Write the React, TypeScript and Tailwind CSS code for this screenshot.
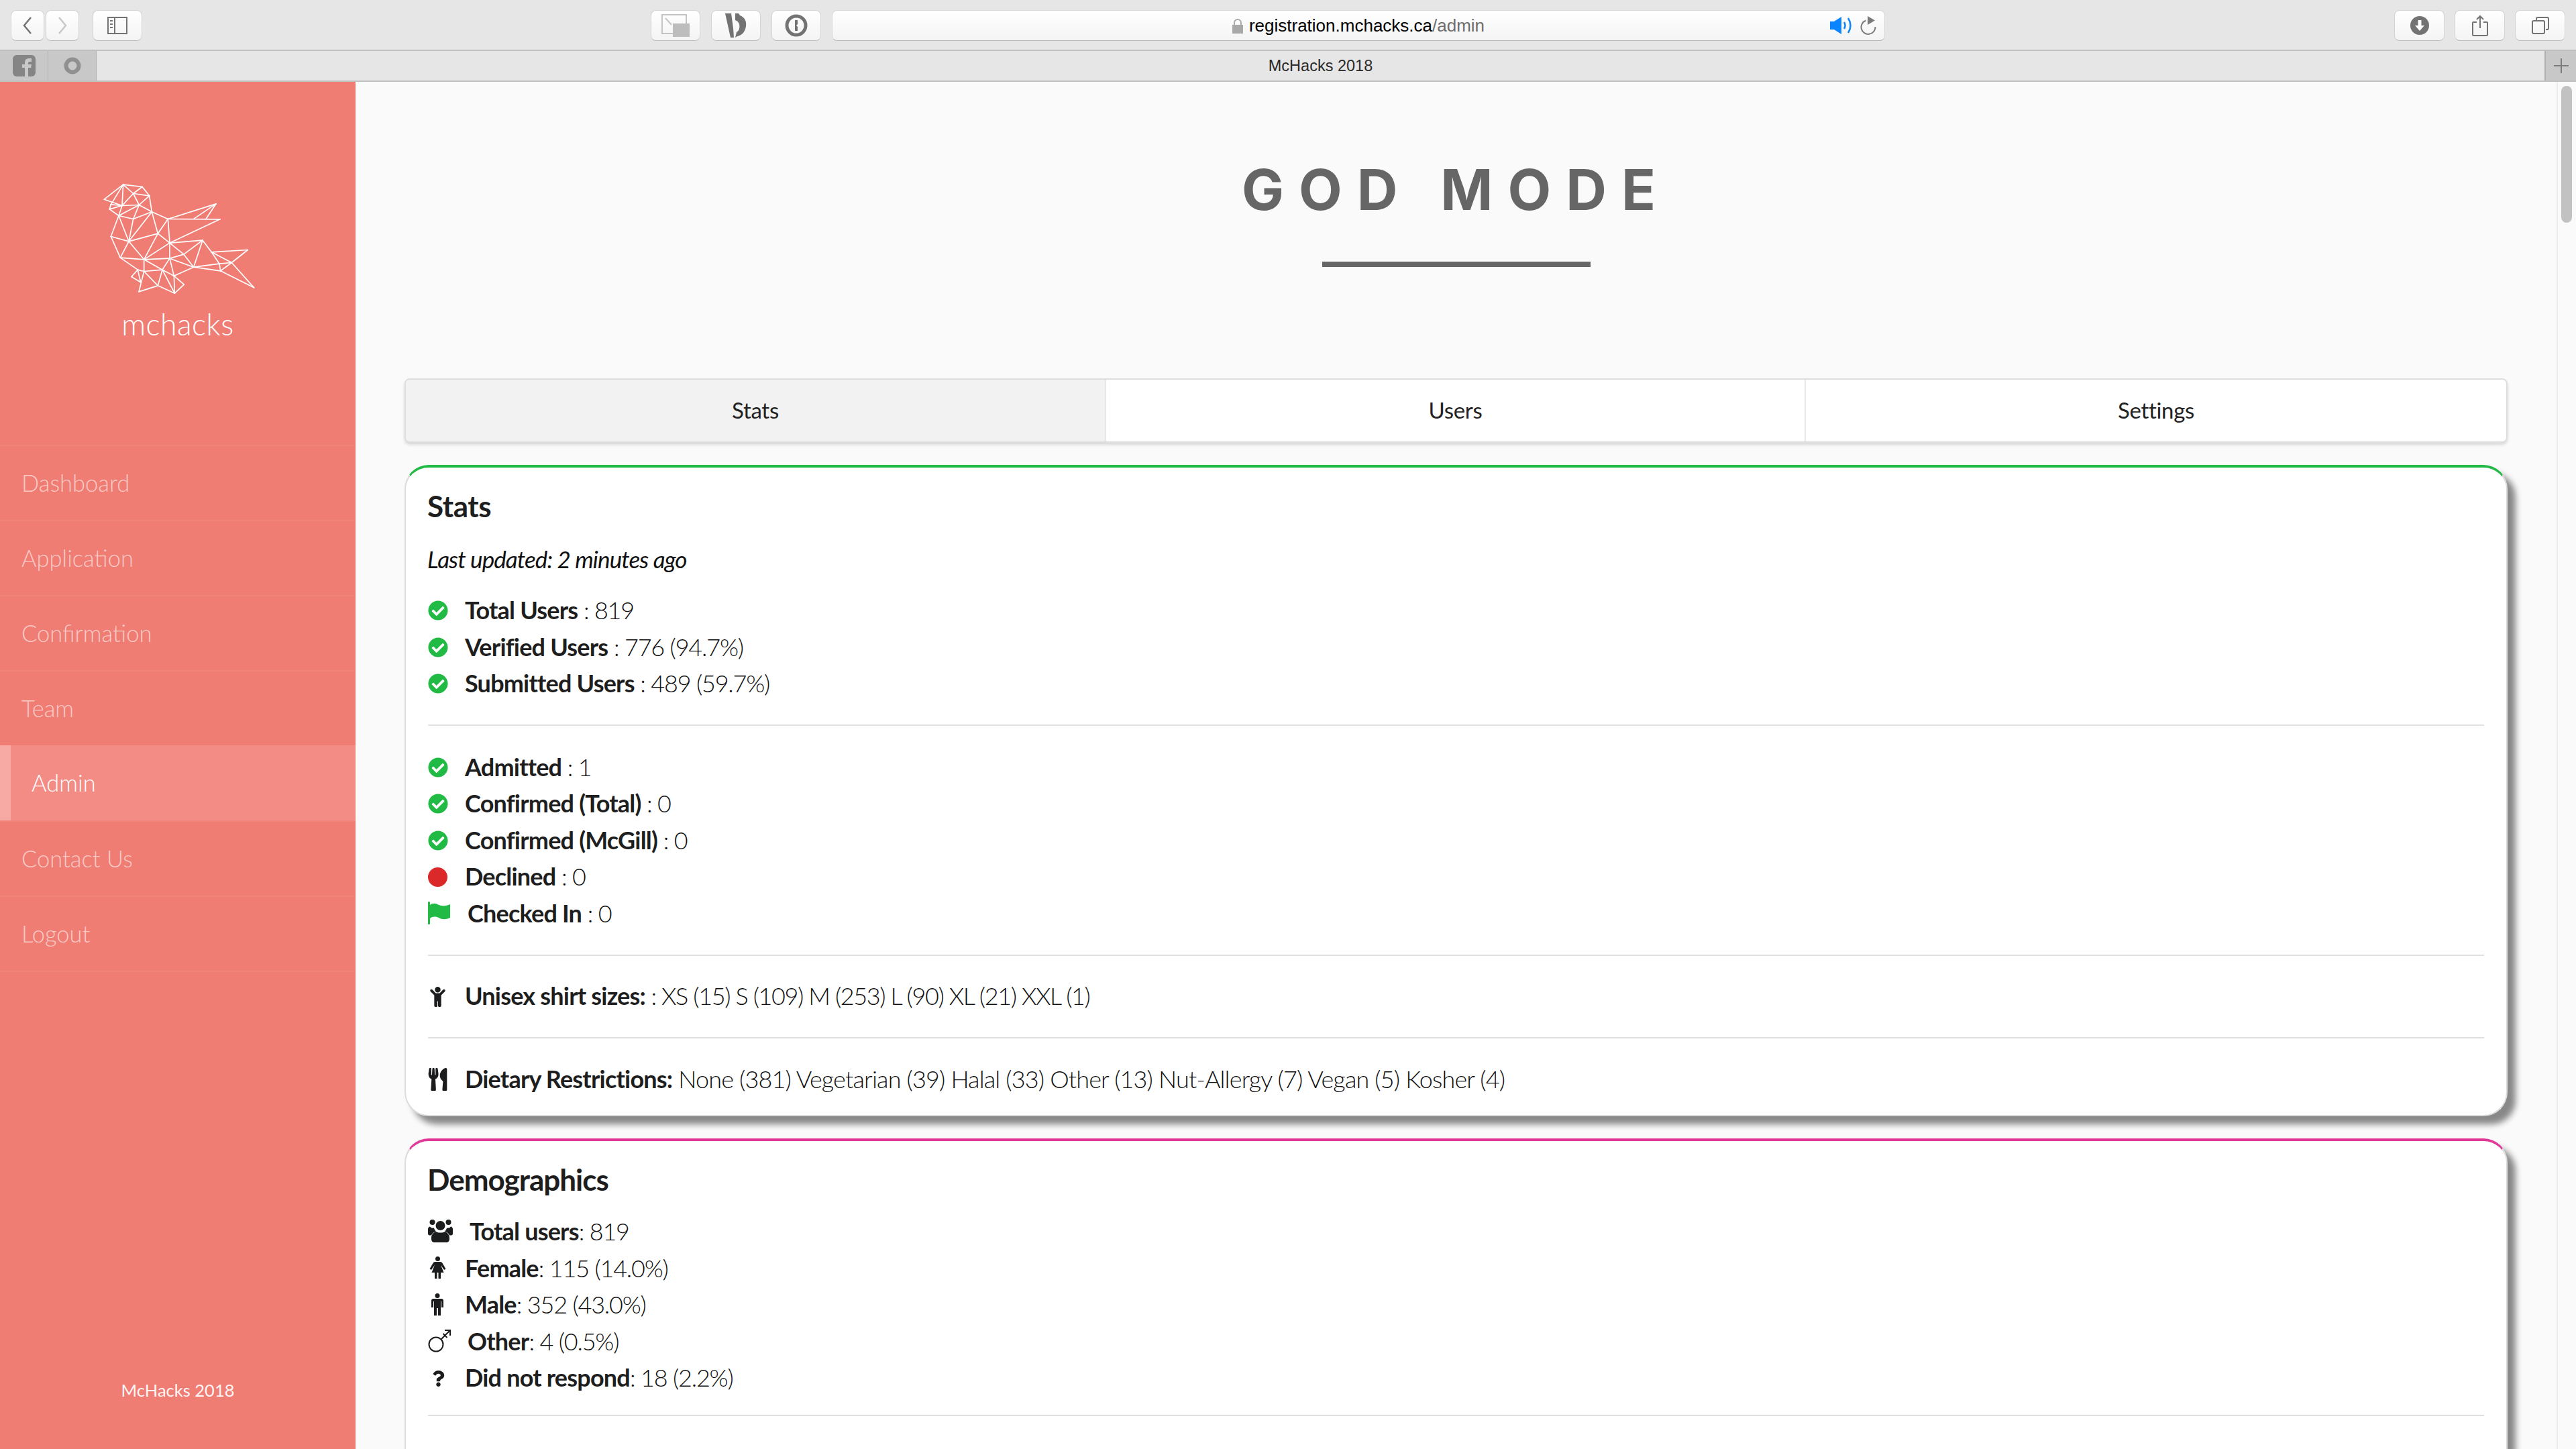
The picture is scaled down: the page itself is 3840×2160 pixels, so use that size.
import type { ReactNode } from 'react';
import { FaCheckCircle, FaChild, FaQuestion, FaUtensils } from 'react-icons/fa';

const POINTS: Record<string, [number, number]> = {
  A: [160, 172], B: [245, 106], C: [330, 116], D: [362, 156], E: [290, 146], F: [240, 200], G: [190, 195], H: [184, 216],
  I: [225, 245], J: [316, 197], K: [373, 228], M: [290, 260], N: [445, 260], O: [660, 192], P: [562, 258], Q: [615, 260],
  R: [678, 261], S: [400, 325], T: [270, 360], U: [190, 338], V: [232, 433], W: [338, 441], X: [453, 367], Y: [600, 355],
  Z: [453, 436], a: [516, 418], b: [560, 475], c: [640, 408], d: [802, 398], e: [730, 455], f: [830, 567], g: [680, 492],
  h: [675, 460], i: [472, 514], j: [420, 487], k: [338, 494], l: [310, 487], m: [282, 518], n: [323, 543], o: [315, 585],
  p: [400, 558], q: [475, 592], r: [517, 553],
};

const EDGES =
  'AB AF BG GF GH HF HI BF BE BC CE CD ED EF EJ DJ DK FJ FI IJ JK JM KM KN KS MT IM IT IU UT UV VT TK TS SN SX SW NX NO NR PO QO RX XY XW XZ Xa Ya Yb Yc ab aZ ZW Zj Zi WV WT Wk Wj Vl lk ln lm mn kj kp ko op pj pq jq ji iq ir rq ib bh bg hg he ge gf ef ed ec cd ch Zb'.split(
    ' ',
  );

function Logo() {
  return (
    <svg viewBox="150 100 690 500" className="w-[230px] h-[167px]" fill="none" stroke="#fff" strokeWidth={5} strokeLinejoin="round" strokeLinecap="round">
      {EDGES.map((edge) => {
        const from = POINTS[edge[0]];
        const to = POINTS[edge[1]];
        return <line key={edge} x1={from[0]} y1={from[1]} x2={to[0]} y2={to[1]} />;
      })}
    </svg>
  );
}

function ToolButton({ width, children }: { width: string; children?: ReactNode }) {
  return (
    <div className={`${width} h-[46px] flex items-center justify-center rounded-[8px] border border-[#d4d4d4] border-b-[#bdbdbd] bg-gradient-to-b from-white to-[#f4f4f4]`}>
      {children}
    </div>
  );
}

function BrowserChrome() {
  return (
    <div className="shrink-0 font-['Liberation_Sans',sans-serif]">
      <div className="h-[74px] bg-[#e6e6e6] flex items-center pl-[16px] pr-[16px] pt-[1px] gap-[16px]">
        <div className="flex gap-[2px]">
          <ToolButton width="w-[50px]">
            <svg width="16" height="28" viewBox="0 0 16 28" fill="none" stroke="#737373" strokeWidth="2.5"><path d="M13 2 3 14l10 12" /></svg>
          </ToolButton>
          <ToolButton width="w-[50px]">
            <svg width="16" height="28" viewBox="0 0 16 28" fill="none" stroke="#c8c8c8" strokeWidth="2.5"><path d="m3 2 10 12L3 26" /></svg>
          </ToolButton>
        </div>
        <div className="ml-[4px]">
          <ToolButton width="w-[74px]">
            <svg width="30" height="26" viewBox="0 0 30 26" fill="none" stroke="#737373" strokeWidth="2">
              <rect x="1" y="1" width="28" height="24" />
              <path d="M11 1v24" />
              <path d="M4 6h4M4 11h4M4 16h4" />
            </svg>
          </ToolButton>
        </div>
        <div className="ml-[742px] flex gap-[16px]">
          <ToolButton width="w-[74px]">
            <svg width="42" height="34" viewBox="0 0 42 34">
              <rect x="1" y="1" width="36" height="28" fill="none" stroke="#c4c4c4" strokeWidth="2" />
              <path d="m6 6 9 10" stroke="#c4c4c4" strokeWidth="2" />
              <rect x="17" y="14" width="25" height="20" fill="#bdbdbd" />
            </svg>
          </ToolButton>
          <ToolButton width="w-[74px]">
            <svg width="32" height="36" viewBox="0 0 32 36" fill="#737373">
              <path d="M0 0h9l3 22 1 14H8zM15 0h5l2 3c8 3 10 10 9 16-1 8-6 14-13 15l-3 2 2-8c4-2 5-7 4-12-1-3-3-5-6-6z" />
            </svg>
          </ToolButton>
          <ToolButton width="w-[74px]">
            <svg width="34" height="34" viewBox="0 0 34 34" fill="none">
              <circle cx="17" cy="17" r="14" stroke="#737373" strokeWidth="5" />
              <path d="M15 9h4v6l-2 2 2 2v6h-4z" fill="#737373" />
            </svg>
          </ToolButton>
        </div>
        <div className="w-[1570px] h-[46px] relative flex items-center justify-center rounded-[8px] border border-[#d8d8d8] border-b-[#b5b5b5] bg-gradient-to-b from-white to-[#f4f4f4] text-[26px] text-black">
          <svg width="16" height="22" viewBox="0 0 16 22" className="mr-[9px] mt-[2px]">
            <path d="M3 10V6a5 5 0 0 1 10 0v4" fill="none" stroke="#a8a8a8" strokeWidth="2" />
            <rect y="9" width="16" height="13" fill="#a8a8a8" />
          </svg>
          <span className="pt-[2px]">registration.mchacks.ca<span className="text-[#6e6e6e]">/admin</span></span>
          <div className="absolute right-[12px] top-0 bottom-0 flex items-center gap-[12px]">
            <svg width="33" height="26" viewBox="0 0 33 26" fill="none">
              <path d="M0 7h6L17 0v26L6 19H0z" fill="#0b84ff" />
              <path d="M21 8q3 5 0 10" stroke="#0b84ff" strokeWidth="2.500" />
              <path d="M27 2q7 11 0 22" stroke="#0b84ff" strokeWidth="2.500" />
            </svg>
            <svg width="24" height="28" viewBox="0 0 24 28" fill="none">
              <path d="M8.500 6.500A10.500 10.500 0 1 0 22.500 16" stroke="#7a7a7a" strokeWidth="2" />
              <path d="M11 0l11 6.500L11 13z" fill="#7a7a7a" />
            </svg>
          </div>
        </div>
        <div className="ml-auto flex gap-[15px]">
          <ToolButton width="w-[75px]">
            <svg width="28" height="28" viewBox="0 0 28 28">
              <circle cx="14" cy="14" r="14" fill="#737373" />
              <path d="M11.500 6h5v8h4.500L14 22l-7-8h4.500z" fill="#fff" />
            </svg>
          </ToolButton>
          <ToolButton width="w-[75px]">
            <svg width="24" height="32" viewBox="0 0 24 32" fill="none" stroke="#737373" strokeWidth="2">
              <path d="M7 11H2a1 1 0 0 0-1 1v18a1 1 0 0 0 1 1h20a1 1 0 0 0 1-1V12a1 1 0 0 0-1-1h-5" />
              <path d="M12 20V2M7 7l5-5 5 5" />
            </svg>
          </ToolButton>
          <ToolButton width="w-[75px]">
            <svg width="26" height="26" viewBox="0 0 26 26" fill="none" stroke="#737373" strokeWidth="2">
              <rect x="1" y="6" width="18" height="19" rx="2" />
              <path d="M7 5V3a2 2 0 0 1 2-2h14a2 2 0 0 1 2 2v14a2 2 0 0 1-2 2h-2" />
            </svg>
          </ToolButton>
        </div>
      </div>
      <div className="h-[48px] bg-[#e6e6e6] border-y-2 border-[#c0c0c0] flex items-stretch">
        <div className="w-[72px] bg-[#c8c8c8] border-r border-[#b0b0b0] flex items-center justify-center">
          <svg width="34" height="32" viewBox="0 0 34 32">
            <rect width="34" height="32" rx="6" fill="#858585" />
            <path d="M18 32V19h-4v-5h4v-3q0-6 6-6h4v5h-3q-2 0-2 2v2h5l-1 5h-4v13z" fill="#c8c8c8" />
          </svg>
        </div>
        <div className="w-[72px] bg-[#c8c8c8] border-r border-[#b0b0b0] flex items-center justify-center">
          <svg width="26" height="26" viewBox="0 0 26 26"><circle cx="13" cy="13" r="9.500" fill="none" stroke="#909090" strokeWidth="6" /></svg>
        </div>
        <div className="flex-1 flex items-center justify-center pt-[1px] text-[23.500px] text-[#2a2a2a]">McHacks 2018</div>
        <div className="w-[47px] bg-[#c8c8c8] border-l-2 border-[#b0b0b0] flex items-center justify-center">
          <svg width="24" height="24" viewBox="0 0 24 24" stroke="#7b7b7b" strokeWidth="2"><path d="M12 1v22M1 12h22" /></svg>
        </div>
      </div>
    </div>
  );
}

const NAV = ['Dashboard', 'Application', 'Confirmation', 'Team', 'Admin', 'Contact Us', 'Logout'];

function Sidebar() {
  return (
    <aside className="w-[530px] shrink-0 bg-[#f07d74] flex flex-col items-stretch pt-[151px] pb-[68px]">
      <div className="flex flex-col items-center">
        <div className="ml-[4px]"><Logo /></div>
        <div className="mt-[18px] h-[50px] leading-[50px] text-[44.500px] font-light text-white tracking-[0.5px]">mchacks</div>
      </div>
      <nav className="mt-[155px] border-b-2 border-white/5">
        {NAV.map((item) =>
          item === 'Admin' ? (
            <div key={item} className="h-[112px] flex items-center bg-[#f38c84] border-l-[16px] border-[#f7a9a3] pl-[31px] text-[34.500px] font-light text-white">
              {item}
            </div>
          ) : (
            <div key={item} className="h-[112px] flex items-center border-t-2 border-white/5 pl-[32px] text-[34.500px] font-light text-white/60">
              {item}
            </div>
          ),
        )}
      </nav>
      <div className="mt-auto h-[40px] leading-[40px] text-center text-[25.500px] text-white/95 font-normal">McHacks 2018</div>
    </aside>
  );
}

function Row({ icon, slot = 'w-[55px]', label, value, spacing = 'tracking-[-1.2px]' }: { icon: ReactNode; slot?: string; label: string; value: string; spacing?: string }) {
  return (
    <div className="h-[54.500px] flex items-center whitespace-pre">
      <div className={`${slot} shrink-0 flex items-center`}>{icon}</div>
      <span className="font-bold text-[#1e1e1e] tracking-[-0.8px]">{label}</span>
      <span className={`font-light text-[#111] ${spacing}`}>{value}</span>
    </div>
  );
}

function Divider({ className }: { className: string }) {
  return <div className={`h-[2px] bg-[#e0e0e0] ${className}`} />;
}

const Check = <FaCheckCircle className="w-[30px] h-[30px] -ml-[0.5px] mt-[2px] text-[#21ba45]" />;
const Dark = 'text-[#1b1c1d]';

function Flag() {
  return (
    <svg width="33" height="34" viewBox="0 0 33 34" fill="#21ba45">
      <rect x="0" y="0" width="3" height="34" rx="1" />
      <path d="M3 5c4-3 8-3 13 0 5 2 11 2 17-1v20c-6 3-12 3-17 0-5-2-9-2-13 1z" />
    </svg>
  );
}

function UsersIcon() {
  return (
    <svg width="37" height="34" viewBox="0 0 37 34" className={Dark} fill="currentColor">
      <circle cx="6.500" cy="4" r="4" />
      <circle cx="30.500" cy="4" r="4" />
      <circle cx="18.500" cy="9" r="7" />
      <path d="M3 10.500c1 1.500 3 2.500 6 2 .5 2 1.500 4 3 5-3 1-6 3-7 6H2.500C1 23.500 0 22.500 0 21v-7c0-1.500 1.500-3.500 3-3.500z" />
      <path d="M34 10.500c-1 1.500-3 2.500-6 2-.5 2-1.500 4-3 5 3 1 6 3 7 6h2.500c1.500 0 2.500-1 2.500-2.500v-7c0-1.500-1.500-3.500-3-3.500z" />
      <path d="M12 18c3 2 10 2 13 0 4 1 7 5 7 9v2c0 3-2 5-5 5H10c-3 0-5-2-5-5v-2c0-4 3-8 7-9z" />
    </svg>
  );
}

function FemaleIcon() {
  return (
    <svg width="25" height="33" viewBox="0 0 25 33" className={`${Dark} ml-[2px]`} fill="currentColor">
      <circle cx="12.500" cy="3.500" r="3.500" />
      <path d="M8.500 8h8c1.500 0 2.500 1 3 2l5 8.500-2.500 1.500-5-7.500 4.500 11.500h-4.500v9h-3.500v-9h-2v9H8v-9H3.500L8 12.500 3 20 .5 18.500l5-8.500c.5-1 1.500-2 3-2z" />
    </svg>
  );
}

function MaleIcon() {
  return (
    <svg width="20" height="33" viewBox="0 0 20 33" className={`${Dark} ml-[4px]`} fill="currentColor">
      <circle cx="10" cy="3.500" r="3.500" />
      <path d="M4 8h12a3 3 0 0 1 3 3v10h-3V12h-1v21h-4V22H9v11H5V12H4v9H1V11a3 3 0 0 1 3-3z" />
    </svg>
  );
}

function OtherIcon() {
  return (
    <svg width="34" height="35" viewBox="0 0 34 35" className={Dark} fill="none" stroke="currentColor" strokeWidth="2">
      <circle cx="12" cy="23" r="10.500" />
      <path d="M20 15 32 3M25 2h8v8M22.500 7l6 6" />
    </svg>
  );
}

function Card({ accent, children }: { accent: string; children: ReactNode }) {
  return (
    <section className={`bg-white border-2 border-t-4 border-[#dcdcdc] ${accent} rounded-[36px] shadow-[12px_12px_10px_#888888] px-[33px] text-[36px] font-light`}>
      {children}
    </section>
  );
}

function Content() {
  return (
    <main className="flex-1 min-w-0 bg-[#fafafa] pl-[73px] pr-[73px] pt-[111px] font-['Lato',sans-serif]">
      <h1 className="h-[100px] leading-[100px] text-center text-[84px] font-bold tracking-[22px] text-[#666] font-['Inter',sans-serif]">GOD MODE</h1>
      <div className="w-[400px] h-[8px] mt-[57px] mx-auto bg-[#666]" />
      <div className="mt-[166px] h-[96px] grid grid-cols-[1042px_1043px_1fr] rounded-[8px] border-2 border-[#dedede] bg-white shadow-[0_3px_4px_rgba(0,0,0,0.14)] text-[33px] text-[#222] tracking-[-0.3px] overflow-hidden">
        <div className="bg-[#f2f2f2] flex items-center justify-center">Stats</div>
        <div className="border-l-2 border-[#e8e8e8] flex items-center justify-center">Users</div>
        <div className="border-l-2 border-[#e8e8e8] flex items-center justify-center">Settings</div>
      </div>

      <div className="mt-[33px]">
        <Card accent="border-t-[#21ba45]">
          <h2 className="mt-[32px] h-[50px] leading-[50px] text-[44px] font-bold text-[#1e1e1e] tracking-[-0.4px] -ml-[1px]">Stats</h2>
          <p className="mt-[29px] h-[50px] leading-[50px] text-[35px] italic font-normal text-[#111] tracking-[-0.9px] -ml-[1px]">Last updated: 2 minutes ago</p>
          <div className="mt-[24px]">
            <Row icon={Check} label="Total Users" value=" : 819" />
            <Row icon={Check} label="Verified Users" value=" : 776 (94.7%)" />
            <Row icon={Check} label="Submitted Users" value=" : 489 (59.7%)" />
          </div>
          <Divider className="mt-[34px] mb-[34px]" />
          <Row icon={Check} label="Admitted" value=" : 1" />
          <Row icon={Check} label="Confirmed (Total)" value=" : 0" />
          <Row icon={Check} label="Confirmed (McGill)" value=" : 0" />
          <Row icon={<span className="w-[29px] h-[29px] mt-[2px] rounded-full bg-[#db2828]" />} label="Declined" value=" : 0" />
          <Row icon={<Flag />} slot="w-[59px]" label="Checked In" value=" : 0" />
          <Divider className="mt-[35px] mb-[32px]" />
          <Row icon={<FaChild className={`w-[29px] h-[30px] mt-[4px] ${Dark}`} />} label="Unisex shirt sizes:" value=" : XS (15) S (109) M (253) L (90) XL (21) XXL (1)" spacing="tracking-[-1.4px]" />
          <Divider className="mt-[34px] mb-[33px]" />
          <Row icon={<FaUtensils className={`w-[29px] h-[34px] mt-[2px] ${Dark}`} />} label="Dietary Restrictions:" value=" None (381) Vegetarian (39) Halal (33) Other (13) Nut-Allergy (7) Vegan (5) Kosher (4)" spacing="tracking-[-0.85px]" />
          <div className="h-[27px]" />
        </Card>
      </div>

      <div className="mt-[33px]">
        <Card accent="border-t-[#e03997]">
          <h2 className="mt-[32px] h-[50px] leading-[50px] text-[44px] font-bold text-[#1e1e1e] tracking-[-1px] -ml-[1px]">Demographics</h2>
          <div className="mt-[25px]">
            <Row icon={<UsersIcon />} slot="w-[62px]" label="Total users" value=": 819" />
            <Row icon={<FemaleIcon />} label="Female" value=": 115 (14.0%)" />
            <Row icon={<MaleIcon />} label="Male" value=": 352 (43.0%)" />
            <Row icon={<OtherIcon />} slot="w-[59px]" label="Other" value=": 4 (0.5%)" />
            <Row icon={<FaQuestion className={`w-[19px] h-[24px] ml-[6px] mt-[4px] ${Dark}`} />} label="Did not respond" value=": 18 (2.2%)" />
          </div>
          <Divider className="mt-[28px] mb-[120px]" />
        </Card>
      </div>
    </main>
  );
}

function Scrollbar() {
  return (
    <div className="w-[29px] shrink-0 bg-[#fafafa] border-l-2 border-[#ececec] pl-[5px] pt-[6px]">
      <div className="w-[16px] h-[204px] rounded-full bg-[#c2c2c2]" />
    </div>
  );
}

export default function App() {
  return (
    <div className="w-[3840px] h-[2160px] overflow-hidden flex flex-col font-['Lato',sans-serif]">
      <BrowserChrome />
      <div className="flex-1 min-h-0 flex">
        <Sidebar />
        <Content />
        <Scrollbar />
      </div>
    </div>
  );
}
